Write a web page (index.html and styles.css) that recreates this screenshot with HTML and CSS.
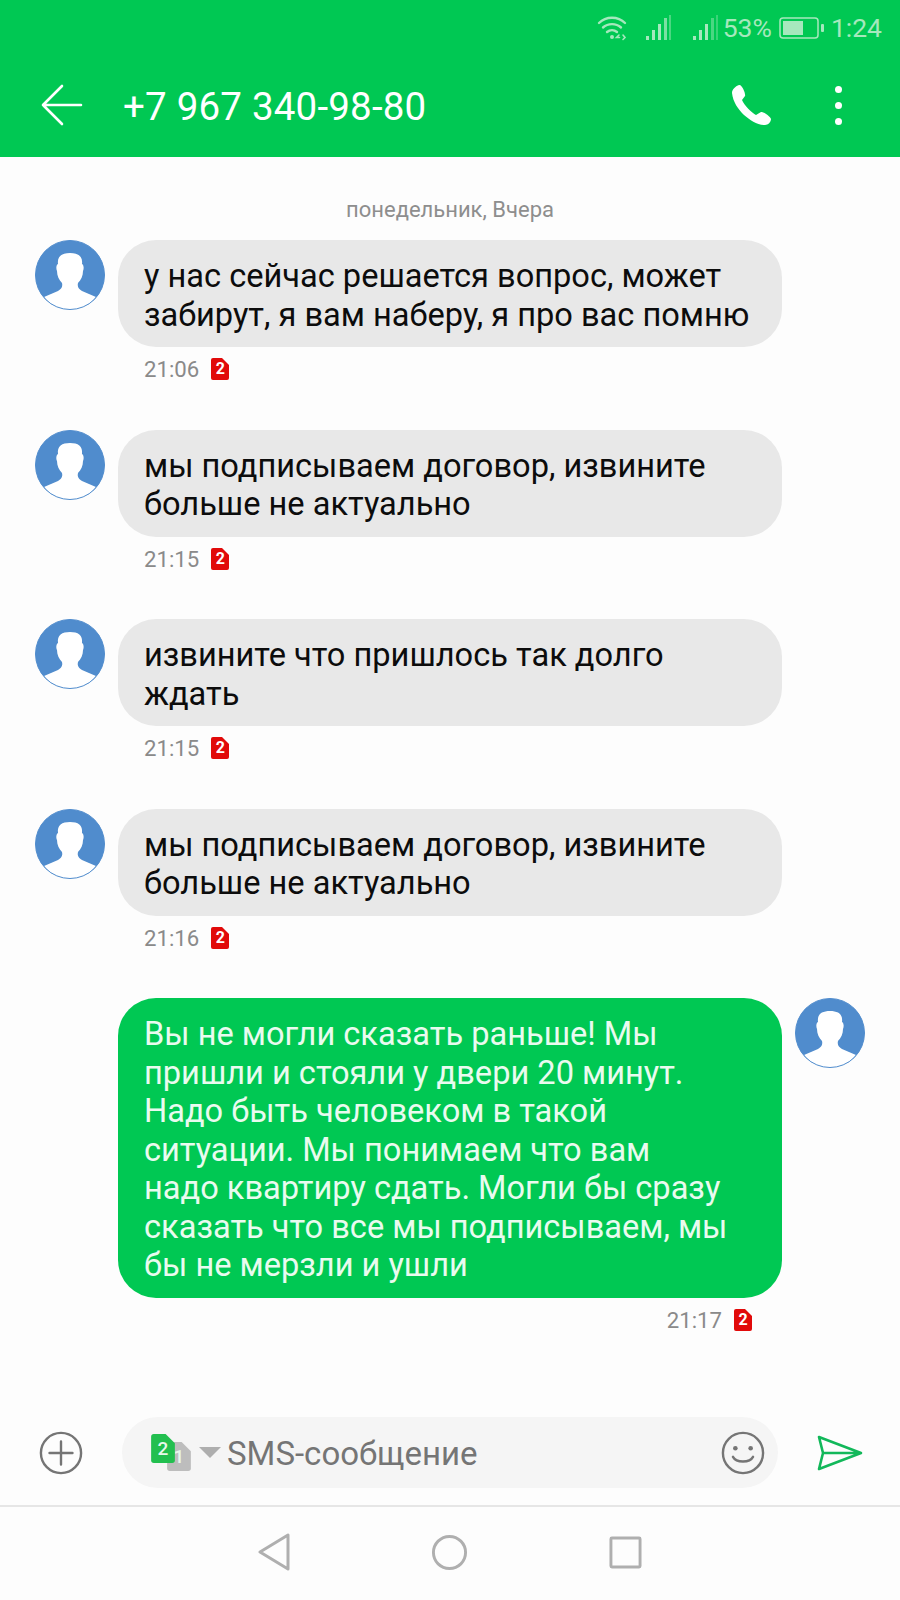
FILE: index.html
```html
<!DOCTYPE html>
<html lang="ru">
<head>
    <meta charset="UTF-8">
    <title>SMS</title>
    <link rel="stylesheet" href="styles.css">
</head>
<body>
    <svg class="defs" width="0" height="0">
        <symbol id="avatar" viewBox="0 0 70 70">
            <circle cx="35" cy="35" r="34.5" fill="#508ccd"/>
            <path d="M9 57 L23 51 C26 49 28 47 27 43 C24 40 22 36 22 31 C21 29 21 25 23 24 C22 16 27 13 35 13 C43 13 48 16 47 24 C49 25 49 29 48 31 C48 36 46 40 43 43 C42 47 44 49 47 51 L61 57 C55 65 45 70 35 70 C25 70 15 65 9 57 Z" fill="#fff"/>
            <circle cx="35" cy="35" r="34.5" fill="none" stroke="#508ccd" stroke-width="1"/>
        </symbol>
        <symbol id="sim" viewBox="0 0 18 22">
            <path d="M2 0 H11 L18 7 V20 A2 2 0 0 1 16 22 H2 A2 2 0 0 1 0 20 V2 A2 2 0 0 1 2 0 Z"/>
        </symbol>
    </svg>

    <div class="app">
        <!-- Green top part -->
        <header class="top">
            <div class="status-bar">
                <svg class="st-wifi" width="30" height="26" viewBox="0 0 30 26" fill="none" stroke="#a6e8bd" stroke-width="2.4" stroke-linecap="round">
                    <path d="M2 8 C9 1 21 1 28 8"/>
                    <path d="M6 12.500 C11 8 19 8 24 12.500"/>
                    <path d="M10 17 C13 14.500 17 14.500 20 17"/>
                    <circle cx="15" cy="22" r="2" fill="#a6e8bd" stroke="none"/>
                    <path d="M22 20 l-2.500 2.500 h3 M26 20 l2 2.500 l-2 2" stroke-width="1.600"/>
                </svg>
                <svg class="st-signal" width="26" height="26" viewBox="0 0 26 26">
                    <rect x="1" y="21" width="3" height="4" fill="#a6e8bd"/>
                    <rect x="7" y="15" width="3" height="10" fill="#a6e8bd"/>
                    <rect x="13" y="9" width="3" height="16" fill="#a6e8bd"/>
                    <rect x="19" y="3" width="3" height="22" fill="#a6e8bd" opacity=".75"/>
                    <rect x="24" y="0" width="2" height="25" fill="#a6e8bd" opacity=".45"/>
                </svg>
                <svg class="st-signal second" width="26" height="26" viewBox="0 0 26 26">
                    <rect x="1" y="21" width="3" height="4" fill="#a6e8bd"/>
                    <rect x="7" y="15" width="3" height="10" fill="#a6e8bd"/>
                    <rect x="13" y="9" width="3" height="16" fill="#a6e8bd"/>
                    <rect x="19" y="3" width="3" height="22" fill="#a6e8bd" opacity=".45"/>
                    <rect x="24" y="0" width="2" height="25" fill="#a6e8bd" opacity=".35"/>
                </svg>
                <span class="st-text st-pct">53%</span>
                <svg class="st-battery" width="45" height="22" viewBox="0 0 45 22">
                    <rect x="1" y="1" width="38" height="20" rx="3" fill="none" stroke="#a6e8bd" stroke-width="1.500"/>
                    <rect x="4" y="4" width="20" height="14" fill="#a6e8bd"/>
                    <rect x="42" y="7" width="3" height="8" rx="1" fill="#a6e8bd"/>
                </svg>
                <span class="st-text">1:24</span>
            </div>
            <div class="title-bar">
                <svg class="back" width="42" height="42" viewBox="0 0 42 42" fill="none" stroke="#fff" stroke-width="2.600" stroke-linecap="round" stroke-linejoin="round">
                    <path d="M2 21 H40 M21 2 L2 21 L21 40"/>
                </svg>
                <h1 class="title">+7 967 340-98-80</h1>
                <svg class="call" width="42" height="42" viewBox="0 0 42 42">
                    <path d="M9 1 C6 2 2 5 2 9 C3 18 8 25 14 31 C20 36 27 41 35 41 C38 41 41 38 41 35 C41 33 33 27 31 28 L26 31 C22 29 14 21 12 16 L15 12 C16 10 12 0 9 1 Z" fill="#fff"/>
                </svg>
                <div class="dots"><i></i><i></i><i></i></div>
            </div>
        </header>

        <main class="chat">
            <div class="day">понедельник, Вчера</div>

            <div class="msg">
                <svg class="avatar"><use href="#avatar"/></svg>
                <div class="body">
                    <div class="bubble">у нас сейчас решается вопрос, может забирут, я вам наберу, я про вас помню</div>
                    <div class="meta"><span>21:06</span><svg class="sim"><use href="#sim"/></svg><b class="sim-num">2</b></div>
                </div>
            </div>

            <div class="msg">
                <svg class="avatar"><use href="#avatar"/></svg>
                <div class="body">
                    <div class="bubble">мы подписываем договор, извините больше не актуально</div>
                    <div class="meta"><span>21:15</span><svg class="sim"><use href="#sim"/></svg><b class="sim-num">2</b></div>
                </div>
            </div>

            <div class="msg">
                <svg class="avatar"><use href="#avatar"/></svg>
                <div class="body">
                    <div class="bubble">извините что пришлось так долго ждать</div>
                    <div class="meta"><span>21:15</span><svg class="sim"><use href="#sim"/></svg><b class="sim-num">2</b></div>
                </div>
            </div>

            <div class="msg">
                <svg class="avatar"><use href="#avatar"/></svg>
                <div class="body">
                    <div class="bubble">мы подписываем договор, извините больше не актуально</div>
                    <div class="meta"><span>21:16</span><svg class="sim"><use href="#sim"/></svg><b class="sim-num">2</b></div>
                </div>
            </div>

            <div class="msg out">
                <div class="body">
                    <div class="bubble">Вы не могли сказать раньше! Мы пришли и стояли у двери 20 минут. Надо быть человеком в такой ситуации. Мы понимаем что вам надо квартиру сдать. Могли бы сразу сказать что все мы подписываем, мы бы не мерзли и ушли</div>
                    <div class="meta"><span>21:17</span><svg class="sim"><use href="#sim"/></svg><b class="sim-num">2</b></div>
                </div>
                <svg class="avatar"><use href="#avatar"/></svg>
            </div>
        </main>

        <!-- Composer -->
        <div class="composer">
            <svg class="plus" width="44" height="44" viewBox="0 0 46 46" fill="none" stroke="#757575" stroke-width="2.500" stroke-linecap="round">
                <circle cx="23" cy="23" r="21"/>
                <path d="M23 11 V35 M11 23 H35"/>
            </svg>
            <div class="input">
                <div class="sim-pick">
                    <div class="sim-one"><svg><use href="#sim"/></svg><b>1</b></div>
                    <div class="sim-two"><svg><use href="#sim"/></svg><b>2</b></div>
                </div>
                <span class="caret"></span>
                <span class="placeholder">SMS-сообщение</span>
                <svg class="smile" width="44" height="44" viewBox="0 0 46 46" fill="none" stroke="#757575" stroke-width="2.500" stroke-linecap="round">
                    <circle cx="23" cy="23" r="21"/>
                    <circle cx="15" cy="18" r="2.400" fill="#757575" stroke="none"/>
                    <circle cx="31" cy="18" r="2.400" fill="#757575" stroke="none"/>
                    <path d="M12.500 27 C16 33.500 30 33.500 33.500 27"/>
                </svg>
            </div>
            <svg class="send" width="46" height="36" viewBox="0 0 46 36" fill="none" stroke="#12b85a" stroke-width="2.600" stroke-linejoin="round">
                <path d="M2 2 L44 18 L2 34 L6 18 Z M6 18 H44"/>
            </svg>
        </div>

        <nav class="nav-bar">
            <svg width="32" height="38" viewBox="0 0 32 38" fill="none" stroke="#afafaf" stroke-width="3" stroke-linejoin="round"><path d="M30 2 V36 L2 19 Z"/></svg>
            <svg width="37" height="37" viewBox="0 0 38 38" fill="none" stroke="#afafaf" stroke-width="3"><circle cx="19" cy="19" r="16.500"/></svg>
            <svg width="33" height="33" viewBox="0 0 34 34" fill="none" stroke="#afafaf" stroke-width="3" stroke-linejoin="round"><rect x="2" y="2" width="30" height="30" rx="1"/></svg>
        </nav>
    </div>
</body>
</html>
```

FILE: styles.css
```css
body {
    margin: 0;
    background-color: #fdfdfd;
    font-family: Roboto, "Noto Sans", sans-serif;
}
.defs {
    position: absolute;
}
.app {
    width: 900px;
    height: 1600px;
    display: flex;
    flex-direction: column;
    overflow: hidden;
}

/* top */
.top {
    height: 157px;
    background-color: #00c853;
    color: white;
}
.status-bar {
    height: 55px;
    padding-right: 18px;
    display: flex;
    align-items: center;
    justify-content: flex-end;
    box-sizing: border-box;
}
.st-wifi {
    margin-right: 18px;
}
.st-signal.second {
    margin-left: 21px;
}
.st-text {
    font-size: 26.500px;
    color: #a6e8bd;
}
.st-pct {
    margin-left: 5px;
}
.st-battery {
    margin: 0 7px 0 7px;
}
.title-bar {
    height: 102px;
    padding: 0 58px 2px 41px;
    display: flex;
    align-items: center;
    box-sizing: border-box;
}
.title {
    flex: 1;
    margin: 2px 0 0 40px;
    font-size: 38.500px;
    font-weight: 400;
    letter-spacing: 0.2px;
}
.call {
    margin-right: 63px;
}
.dots {
    display: flex;
    flex-direction: column;
    gap: 9px;
}
.dots i {
    display: block;
    width: 7px;
    height: 7px;
    border-radius: 50%;
    background: white;
}

/* messages */
.chat {
    flex: 1;
    padding: 41px 35px 0;
}
.day {
    text-align: center;
    font-size: 22px;
    line-height: 24px;
    color: #8e8e8e;
    margin-bottom: 18px;
}
.msg {
    display: flex;
    gap: 13px;
    margin-bottom: 38.500px;
}
.msg.out {
    justify-content: flex-end;
}
.avatar {
    width: 70px;
    height: 70px;
    flex: none;
}
.body {
    width: 664px;
}
.bubble {
    box-sizing: border-box;
    padding: 17px 30px 13px 26px;
    border-radius: 38px;
    background-color: #e8e8e8;
    color: #0c0c0c;
    font-size: 32.600px;
    line-height: 38.500px;
}
.msg.out .bubble {
    padding-right: 52px;
    background-color: #00c853;
    color: #e9fbef;
}
.meta {
    height: 44px;
    padding-left: 26px;
    display: flex;
    align-items: center;
    position: relative;
    font-size: 22.200px;
    color: #8a8a8a;
}
.msg.out .meta {
    justify-content: flex-end;
    padding: 0 30px 0 0;
}
.sim {
    width: 18px;
    height: 22px;
    margin-left: 12px;
    fill: #e10a0a;
}
.sim-num {
    width: 18px;
    margin-left: -18px;
    font-size: 16px;
    line-height: 22px;
    color: white;
    text-align: center;
    position: relative;
}

/* composer */
.composer {
    height: 71px;
    padding: 0 39px 17px;
    display: flex;
    align-items: center;
    border-bottom: 2px solid #e6e6e6;
}
.input {
    width: 656px;
    height: 71px;
    margin: 0 39px 0 39px;
    padding: 0 13px 0 29px;
    box-sizing: border-box;
    display: flex;
    align-items: center;
    flex: none;
    border-radius: 36px;
    background-color: #f5f5f5;
}
.sim-pick {
    width: 42px;
    height: 37px;
    position: relative;
}
.sim-one, .sim-two {
    position: absolute;
    width: 24px;
    height: 29px;
}
.sim-one {
    left: 16px;
    top: 8px;
    fill: #bdbdbd;
}
.sim-two {
    left: 0;
    top: 0;
    fill: #22bf4f;
}
.sim-pick svg {
    width: 100%;
    height: 100%;
    display: block;
}
.sim-pick b {
    position: absolute;
    inset: 0;
    text-align: center;
    font-size: 19px;
    font-weight: 500;
    line-height: 29px;
    color: #e8f8ec;
}
.caret {
    width: 0;
    height: 0;
    margin: 0 6px 0 6px;
    border-left: 11px solid transparent;
    border-right: 11px solid transparent;
    border-top: 11px solid #aeaeae;
}
.placeholder {
    flex: 1;
    padding-top: 2px;
    font-size: 33px;
    color: #757575;
}
.plus, .send {
    flex: none;
}

/* nav */
.nav-bar {
    height: 93px;
    padding-bottom: 3px;
    display: flex;
    align-items: center;
    justify-content: center;
    gap: 141px;
    box-sizing: border-box;
}
```
